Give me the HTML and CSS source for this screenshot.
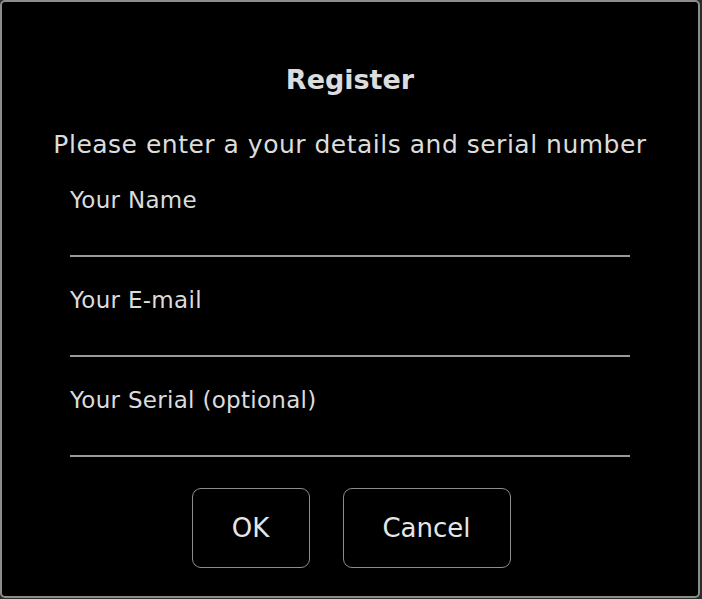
FILE: index.html
```html
<!DOCTYPE html>
<html>
<head>
<meta charset="utf-8">
<link rel="stylesheet" href="styles.css">
</head>
<body>
<div class="window">
  <h1 class="title">Register</h1>
  <p class="subtitle">Please enter a your details and serial number</p>
  <div class="fields">
    <div class="field">
      <label class="label">Your Name</label>
      <div class="line"></div>
    </div>
    <div class="field">
      <label class="label">Your E-mail</label>
      <div class="line"></div>
    </div>
    <div class="field">
      <label class="label">Your Serial (optional)</label>
      <div class="line"></div>
    </div>
  </div>
  <div class="buttons">
    <button class="btn btn-ok">OK</button>
    <button class="btn btn-cancel">Cancel</button>
  </div>
</div>
</body>
</html>
```

FILE: styles.css
```css
html, body {
  margin: 0;
  padding: 0;
  background: #2b2b2b;
  width: 702px;
  height: 599px;
  overflow: hidden;
}
.window {
  box-sizing: border-box;
  width: 700px;
  height: 598px;
  background: #000;
  border: 2px solid #8c8c8c;
  border-radius: 5px;
  font-family: "DejaVu Sans", sans-serif;
  color: #dcdcdc;
  display: flex;
  flex-direction: column;
  align-items: center;
}
.title {
  margin: 58px 0 0;
  font-size: 27px;
  font-weight: bold;
  line-height: 40px;
}
.subtitle {
  margin: 28px 0 0;
  font-size: 25px;
  letter-spacing: 0.5px;
  line-height: 34px;
}
.fields {
  width: 560px;
  margin-top: 23px;
  display: flex;
  flex-direction: column;
  gap: 28px;
}
.field {
  display: flex;
  flex-direction: column;
}
.label {
  font-size: 23px;
  letter-spacing: 0.3px;
  line-height: 30px;
}
.line {
  margin-top: 40px;
  height: 2px;
  background: #9a9a9a;
}
.buttons {
  margin-top: 31px;
  margin-left: 2px;
  display: flex;
  gap: 33px;
}
.btn {
  box-sizing: border-box;
  height: 80px;
  background: #000;
  border: 1.5px solid #8c8c8c;
  border-radius: 9px;
  color: #e6e6e6;
  font-family: "DejaVu Sans", sans-serif;
  font-size: 26px;
}
.btn-ok { width: 118px; }
.btn-cancel { width: 168px; }
```
